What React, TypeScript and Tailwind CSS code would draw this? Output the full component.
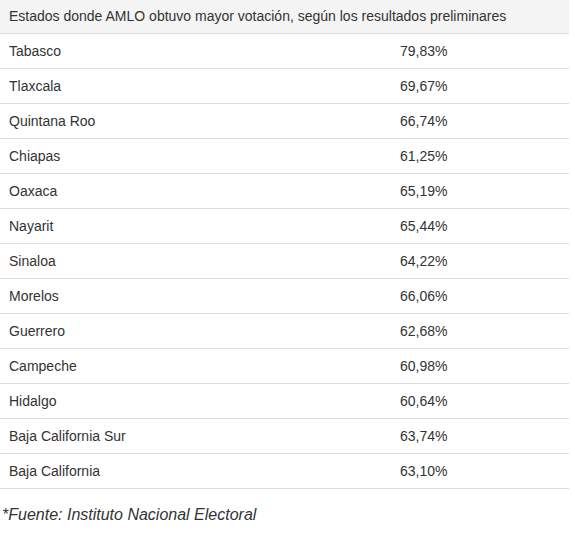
const rows: [string, string][] = [
  ["Tabasco", "79,83%"],
  ["Tlaxcala", "69,67%"],
  ["Quintana Roo", "66,74%"],
  ["Chiapas", "61,25%"],
  ["Oaxaca", "65,19%"],
  ["Nayarit", "65,44%"],
  ["Sinaloa", "64,22%"],
  ["Morelos", "66,06%"],
  ["Guerrero", "62,68%"],
  ["Campeche", "60,98%"],
  ["Hidalgo", "60,64%"],
  ["Baja California Sur", "63,74%"],
  ["Baja California", "63,10%"],
];

export default function App() {
  return (
    <div className="bg-white w-[575px] h-[537px] font-['Liberation_Sans',Arial,sans-serif] text-[#333]">
      <div className="w-[569px]">
        <div className="flex items-center bg-[#f4f4f4] px-[9px] border-b border-[#ddd] h-[34px] text-[14px]">
          Estados donde AMLO obtuvo mayor votación, según los resultados preliminares
        </div>
        {rows.map(([state, pct]) => (
          <div key={state} className="flex items-center border-b border-[#ddd] h-[35px] text-[14px]">
            <div className="px-[9px] w-[391px]">{state}</div>
            <div className="px-[9px]">{pct}</div>
          </div>
        ))}
      </div>
      <p className="mt-[15px] pl-[2px] text-[16px] italic leading-[22px]">*Fuente: Instituto Nacional Electoral</p>
    </div>
  );
}
